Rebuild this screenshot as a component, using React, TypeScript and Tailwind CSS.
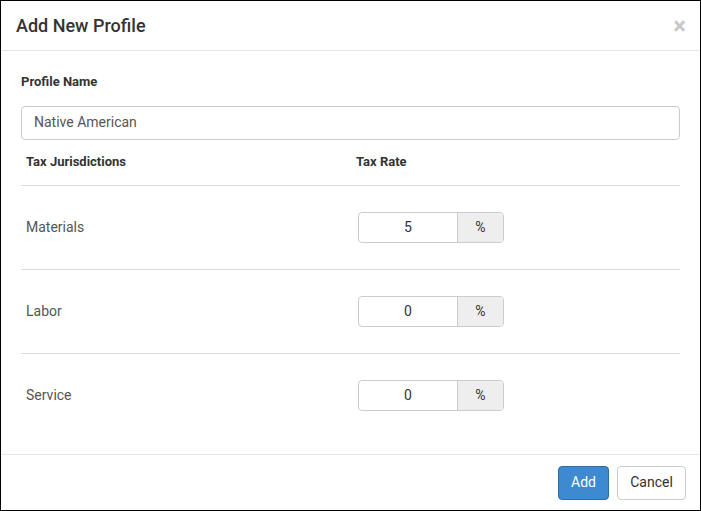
export default function App() {
  const rows = [["Materials", "5"], ["Labor", "0"], ["Service", "0"]];
  return (
    <div className="w-[701px] h-[511px] border border-black bg-white flex flex-col text-[#333]" style={{ fontFamily: "Roboto, 'Liberation Sans', sans-serif" }}>
      <div className="h-[50px] border-b border-[#e5e5e5] flex items-center justify-between pl-[15px] pr-[14px] shrink-0">
        <div className="text-[18px] font-medium text-[#333]">Add New Profile</div>
        <div className="text-[24px] font-bold text-[#c8c8c8] leading-none">×</div>
      </div>
      <div className="flex-1 px-[20px] pt-[21px]">
        <div className="text-[13px] font-bold mb-[14px]">Profile Name</div>
        <div className="h-[34px] border border-[#ccc] rounded-[4px] flex items-center px-[12px] text-[14px] text-[#555]">Native American</div>
        <div className="flex text-[13px] font-bold h-[46px] items-center border-b border-[#ddd] pl-[5px]">
          <div className="w-[330px]">Tax Jurisdictions</div>
          <div>Tax Rate</div>
        </div>
        {rows.map(([n, v], i) => (
          <div key={n} className={`flex items-center h-[84px] pl-[5px] text-[14px] text-[#555] ${i < 2 ? "border-b border-[#ddd]" : ""}`}>
            <div className="w-[332px]">{n}</div>
            <div className="flex h-[31px] w-[146px] border border-[#ccc] rounded-[4px] overflow-hidden text-[#333]">
              <div className="w-[99px] flex items-center justify-center text-[14px] border-r border-[#ccc]">{v}</div>
              <div className="flex-1 bg-[#eee] flex items-center justify-center text-[14px]">%</div>
            </div>
          </div>
        ))}
      </div>
      <div className="h-[56px] border-t border-[#e5e5e5] flex items-center justify-end gap-[8px] pr-[14px] shrink-0">
        <button className="h-[34px] px-[12px] w-[51px] rounded-[4px] bg-[#3d8ad0] border border-[#2e6da4] text-white text-[14px]">Add</button>
        <button className="h-[34px] w-[69px] rounded-[4px] bg-white border border-[#ccc] text-[#333] text-[14px]">Cancel</button>
      </div>
    </div>
  );
}
